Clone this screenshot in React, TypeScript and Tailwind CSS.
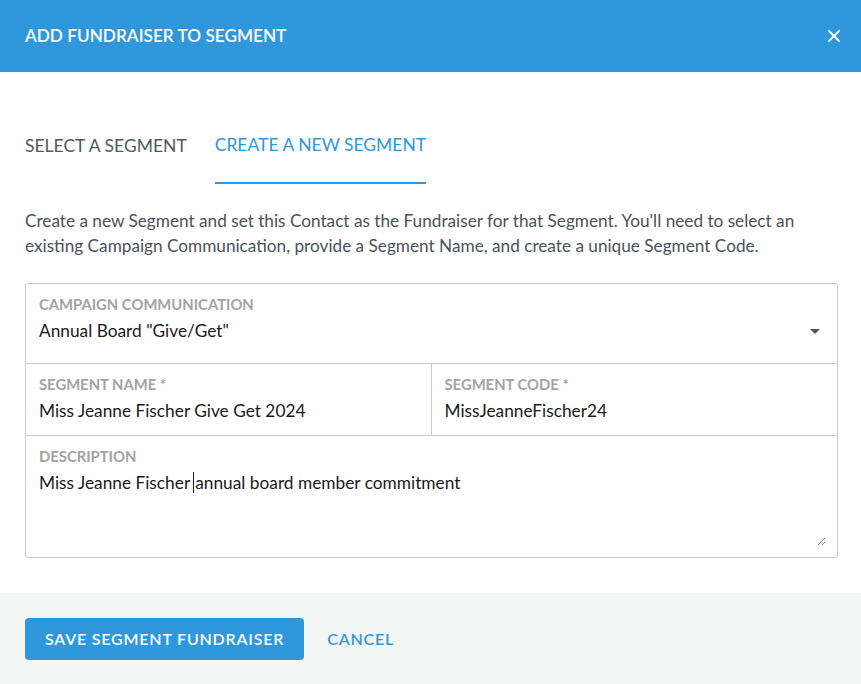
const font = { fontFamily: "Lato, 'Noto Sans', sans-serif" };

const Field = ({ label, value, className = "" }: { label: string; value: string; className?: string }) => (
  <div className={`px-[13px] pt-[11px] ${className}`}>
    <div className="text-[14.8px] font-bold uppercase leading-[18px] text-[#a3a3a3]">{label}</div>
    <div className="mt-[7px] text-[17.3px] leading-[21px] text-[#1a1a1a]">{value}</div>
  </div>
);

const App = () => {
  return (
    <div className="flex h-[684px] w-[861px] flex-col bg-white" style={font}>
      {/* Header */}
      <div className="flex h-[72px] shrink-0 items-center justify-between bg-[#2f98dd] pl-[25px] pr-[21px]">
        <h1 className="text-[17.2px] font-semibold text-white">ADD FUNDRAISER TO SEGMENT</h1>
        <svg width="12" height="12" viewBox="0 0 12 12" className="text-white">
          <path d="M1 1L11 11M11 1L1 11" stroke="currentColor" strokeWidth="1.8" strokeLinecap="square" />
        </svg>
      </div>

      {/* Body */}
      <div className="flex-1 pl-[25px] pr-[23px]">
        <div className="mt-[60px] flex gap-[28px] text-[17.5px]">
          <button className="pb-[24px] text-[#4f5962]">SELECT A SEGMENT</button>
          <button className="border-b-2 border-[#2f98dd] pb-[24px] text-[#2f98dd]">CREATE A NEW SEGMENT</button>
        </div>

        <p className="mt-[24px] text-[17.2px] leading-[25px] text-[#4a525a]">
          Create a new Segment and set this Contact as the Fundraiser for that Segment. You'll need to select an
          existing Campaign Communication, provide a Segment Name, and create a unique Segment Code.
        </p>

        <div className="mt-[25px] rounded-[3px] border border-[#cccccc]">
          <div className="relative h-[80px] border-b border-[#cccccc]">
            <Field label="Campaign Communication" value={'Annual Board "Give/Get"'} />
            <svg width="10" height="5" viewBox="0 0 10 5" className="absolute right-[17px] top-[45px]">
              <path d="M0 0H10L5 5Z" fill="#4f5962" />
            </svg>
          </div>
          <div className="grid h-[72px] grid-cols-2 border-b border-[#cccccc]">
            <Field label="Segment Name *" value="Miss Jeanne Fischer Give Get 2024" className="border-r border-[#cccccc]" />
            <Field label="Segment Code *" value="MissJeanneFischer24" />
          </div>
          <div className="relative h-[121px] px-[13px] pt-[11px]">
            <div className="text-[14.8px] font-bold uppercase leading-[18px] text-[#a3a3a3]">Description</div>
            <div className="mt-[3px] text-[17.3px] leading-[21px] text-[#1a1a1a]">
              Miss Jeanne Fischer <span className="-ml-[1px] mr-[1px] inline-block h-[21px] w-px translate-y-[4px] bg-[#1a1a1a] align-baseline" />annual board member commitment
            </div>
            <svg width="8" height="8" viewBox="0 0 8 8" className="absolute bottom-[12px] right-[12px]">
              <path d="M1 8L8 1M5 8L8 5" stroke="#777" strokeWidth="0.9" />
            </svg>
          </div>
        </div>
      </div>

      {/* Footer */}
      <div className="flex h-[91px] shrink-0 items-center gap-[23px] bg-[#f4f5f5] px-[25px]">
        <button className="h-[42px] rounded-[4px] bg-[#2f98dd] px-[20px] text-[16px] font-semibold tracking-[0.8px] text-white">
          SAVE SEGMENT FUNDRAISER
        </button>
        <button className="text-[16px] font-semibold tracking-[0.8px] text-[#2f98dd]">CANCEL</button>
      </div>
    </div>
  );
};

export default App;
